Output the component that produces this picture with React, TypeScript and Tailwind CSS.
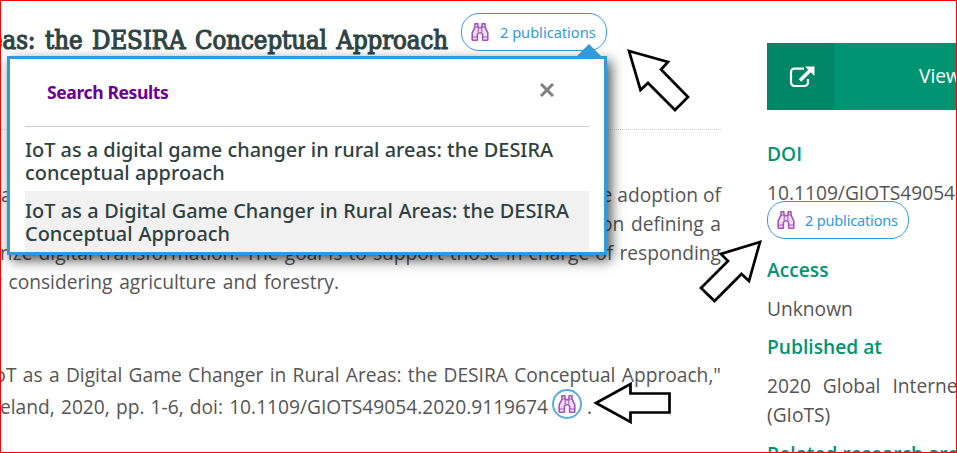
import type { ReactNode } from "react";

function Binoculars({ size }: { size: number }) {
  return (
    <svg width={size} height={size} viewBox="0 0 18 18" fill="#f0e0f5" stroke="#a552bd" strokeWidth="1.6" strokeLinejoin="round" className="shrink-0">
      <path d="M4 .8h2.9v2.7l1.3 1.2h1.6l1.3-1.2V.8H14v3.4l2.8 5.6v6.8a.7.7 0 0 1-.7.7h-3.8a.7.7 0 0 1-.7-.7v-5.4q-2.6-3-5.2 0v5.4a.7.7 0 0 1-.7.7H1.9a.7.7 0 0 1-.7-.7V9.8L4 4.2z" />
      <path d="M1.2 14h5.2M11.6 14h5.2M4 4h3M11 4h3M7.2 4.5v5M10.8 4.5v5" fill="none" strokeWidth="1.1" />
    </svg>
  );
}

function Pill({ textClass }: { textClass: string }) {
  return (
    <div className="flex h-[38px] items-center rounded-[18px] border border-[#3598db] bg-white pl-[9px] text-[#3598db]">
      <Binoculars size={18} />
      <span className={`whitespace-nowrap font-['Noto_Sans',sans-serif] ${textClass}`}>2 publications</span>
    </div>
  );
}

function Label({ children }: { children: ReactNode }) {
  return <h3 className="font-semibold text-[#009473]">{children}</h3>;
}

function Arrow({ points, className }: { points: string; className: string }) {
  return (
    <svg className={className} width="957" height="453" viewBox="0 0 957 453">
      <polygon points={points} fill="white" stroke="black" strokeWidth="2.7" />
    </svg>
  );
}

const row = "whitespace-nowrap h-[29px]";
const stretch = "[text-align-last:justify]";

function Popup() {
  return (
    <div className="absolute left-[6px] top-[55px] h-[199px] w-[600px] border-[3px] border-[#3598db] bg-white px-[15px] font-['Noto_Sans',sans-serif] shadow-[4px_5px_12px_rgba(0,0,0,0.7)]">
      <div className="absolute -top-[15px] right-[3px] h-0 w-0 border-x-[12px] border-b-[12px] border-x-transparent border-b-[#3598db]" />
      <div className="flex h-[68px] items-center justify-between border-b border-[#ccc] pl-[22px] pr-[35px]">
        <span className="text-[17.6px] font-bold tracking-[-0.42px] text-[#6a0093]">Search Results</span>
        <svg width="14" height="14" viewBox="0 0 14 14" stroke="#808080" strokeWidth="3" className="-mt-[5px]">
          <path d="M1 1l12 12M13 1L1 13" />
        </svg>
      </div>
      <div className="h-[64px] whitespace-nowrap pt-[11px] text-[19.9px] font-medium leading-[23px] text-[#2f4040]">
        <div className="w-[528px] [text-align-last:justify]">IoT as a digital game changer in rural areas: the DESIRA</div>
        <div className="w-[199px] [text-align-last:justify]">conceptual approach</div>
      </div>
      <div className="h-[61px] whitespace-nowrap bg-[#f1f1f1] pt-[8px] text-[19.9px] font-medium leading-[23px] text-[#2f4040]">
        <div className="w-[544px] [text-align-last:justify]">IoT as a Digital Game Changer in Rural Areas: the DESIRA</div>
        <div className="w-[205px] [text-align-last:justify]">Conceptual Approach</div>
      </div>
    </div>
  );
}

export default function App() {
  return (
    <div className="relative flex h-[453px] w-[957px] overflow-hidden border border-[#f00] bg-white font-['Open_Sans',sans-serif] text-[19.2px] leading-[29px] text-[#555]">
      <main className="w-[720px] shrink-0">
        <div className="flex h-[129px] items-start justify-between border-b border-dotted border-[#d4d4d4] pr-[114px]">
          <div className="flex h-[78px] w-[447px] justify-end">
            <h1 className="w-[459px] shrink-0 whitespace-nowrap pt-[25px] font-['DejaVu_Serif',serif] text-[25.5px] font-normal tracking-[-0.05px] text-[#2f4444] [-webkit-text-stroke:1.1px_#2f4444] [font-stretch:condensed] [text-align-last:justify]">
              eas: the DESIRA Conceptual Approach
            </h1>
          </div>
          <div className="mt-[12px] w-[146px] shrink-0">
            <Pill textClass="ml-[11px] text-[14.6px]" />
          </div>
        </div>
        <div className="flex h-[180px] flex-col pt-[50px]">
          <div className={`${row} flex justify-between`}>
            <span>a</span>
            <span>the adoption of</span>
          </div>
          <div className={`${row} self-end`}>
            <span className="inline-block w-[120px] [text-align-last:justify]">on defining a</span>
          </div>
          <div className={`${row} ${stretch} ml-[-1px]`}>rize digital transformation. The goal is to support those in charge of responding</div>
          <div className={`${row} ml-[-9px] w-[347px] ${stretch}`}>y considering agriculture and forestry.</div>
        </div>
        <div className="pt-[50px]">
          <div className="ml-[-12px] h-[32px] whitespace-nowrap [text-align-last:justify]">IoT as a Digital Game Changer in Rural Areas: the DESIRA Conceptual Approach,"</div>
          <div className="flex whitespace-nowrap">
            <span className="ml-[-1px] w-[548px] [text-align-last:justify]">eland, 2020, pp. 1-6, doi: 10.1109/GIOTS49054.2020.9119674</span>
            <span className="ml-[4px] -mt-[3px] flex h-[30px] w-[30px] items-center justify-center rounded-full border-2 border-[#55ade4] bg-white">
              <Binoculars size={18} />
            </span>
            <span className="ml-[5px]">.</span>
          </div>
        </div>
      </main>
      <aside className="ml-[46px] w-[300px] shrink-0 pt-[42px]">
        <div className="flex h-[67px] bg-[#009473] text-white">
          <div className="flex w-[67px] items-center justify-center bg-[#008566]">
            <svg width="26" height="24" viewBox="0 0 26 24" fill="none" stroke="white" strokeWidth="2.2" className="ml-[3px]">
              <path d="M15 3.6H5.5A3.5 3.5 0 0 0 2 7.1v10.4A3.5 3.5 0 0 0 5.5 21h10a3.5 3.5 0 0 0 3.5-3.5V14" />
              <path d="M11 15.5L22 4.5" strokeWidth="3.6" />
              <path d="M16 1.5h9.5V11z" fill="white" stroke="none" />
            </svg>
          </div>
          <div className="pl-[85px] pt-[18px]">View</div>
        </div>
        <div className="pt-[29px]">
          <Label>DOI</Label>
          <div className="mt-[10px] h-[23px] whitespace-nowrap">10.1109/GIOTS49054.2020.9119674</div>
          <div className="relative w-[142px]">
            <Pill textClass="ml-[10px] text-[14.6px] tracking-[-0.2px]" />
          </div>
          <div className="mt-[16px]">
            <Label>Access</Label>
          </div>
          <div className="mt-[10px]">Unknown</div>
          <div className="mt-[9px]">
            <Label>Published at</Label>
          </div>
          <div className="mt-[10px] whitespace-nowrap [word-spacing:7px]">2020 Global Internet of Things Summit</div>
          <div>(GIoTS)</div>
          <div className="mt-[10px] whitespace-nowrap">
            <Label>Related research areas</Label>
          </div>
        </div>
      </aside>
      <Popup />
      <Arrow className="absolute -left-px -top-px" points="629,51 668,62 661,69.5 688,97 675,110 648,83 640.5,90" />
      <Arrow className="absolute -left-px -top-px" points="760,242 721,254 728,261 701,288 714.5,301 741.5,274 749,281" />
      <Arrow className="absolute -left-px -top-px" points="596,403 630.5,384 630.5,393.5 669.5,393.5 669.5,412.5 630.5,412.5 630.5,422" />
    </div>
  );
}
